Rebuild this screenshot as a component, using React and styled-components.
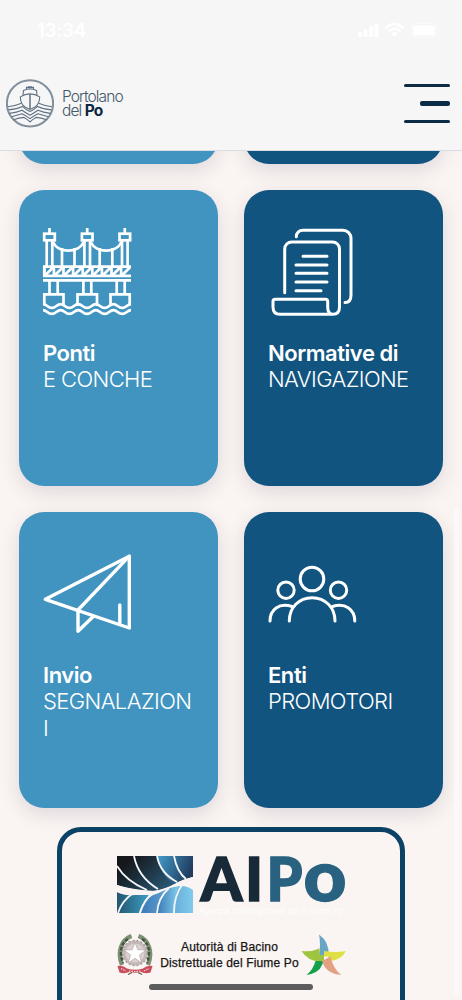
import React from "react";
import styled, { createGlobalStyle } from "styled-components";

const GlobalStyle = createGlobalStyle`
  * {
    box-sizing: border-box;
  }
  body {
    margin: 0;
    background-color: #faf4f2;
    font-family: Inter, "Liberation Sans", sans-serif;
  }
`;

const Page = styled.div`
  position: relative;
  display: flex;
  flex-direction: column;
  height: 1000px;
  overflow: hidden;
`;

const Header = styled.header`
  display: flex;
  flex-direction: column;
  flex: none;
  height: 151px;
  background-color: #f6f6f6;
  border-bottom: 1px solid #d9dde1;
  z-index: 10;
`;

const StatusBar = styled.div`
  display: flex;
  align-items: center;
  justify-content: space-between;
  height: 60px;
  padding: 0 21px 0 37px;
  color: white;
`;

const Time = styled.span`
  font-size: 18.5px;
  font-weight: 600;
  letter-spacing: -0.1px;
`;

const NavRow = styled.div`
  display: flex;
  align-items: center;
  justify-content: space-between;
  height: 87px;
  padding: 0 12px 0 6px;
`;

const Brand = styled.div`
  display: flex;
  align-items: center;
  gap: 8px;
`;

const BrandName = styled.div`
  font-size: 15.5px;
  font-weight: 300;
  line-height: 14px;
  letter-spacing: -0.9px;
  color: #43566a;

  b {
    font-weight: 700;
    color: #0b2840;
  }
`;

const MenuButton = styled.button`
  display: flex;
  flex-direction: column;
  align-items: flex-end;
  justify-content: space-between;
  width: 46px;
  height: 39px;
  padding: 0;
  border: none;
  background: none;
`;

const MenuLine = styled.span`
  width: ${(props) => (props.$short ? "30px" : "46px")};
  height: ${(props) => (props.$short ? "5px" : "2.6px")};
  border-radius: 2px;
  background-color: #0c2b44;
`;

const Main = styled.main`
  flex: 1;
  min-height: 0;
  overflow: hidden;
`;

/* scrolled so that only the bottom edge of the first row is visible */
const Grid = styled.div`
  display: grid;
  grid-template-columns: 199px 199px;
  grid-auto-rows: 296px;
  gap: 26px;
  margin: -283px 0 0 19px;
`;

const Card = styled.a`
  display: flex;
  flex-direction: column;
  padding: 38px 24px 0;
  border-radius: 25px;
  background-color: ${(props) => (props.$dark ? "#115480" : "#4094bf")};
  box-shadow: 0 6px 20px rgba(50, 30, 70, 0.13);
  color: white;
  font-size: 22px;
  line-height: 26.4px;
`;

const CardIcon = styled.svg`
  flex: none;
  width: 88px;
  height: 88px;
  margin-bottom: 24px;
  overflow: visible;
  fill: none;
  stroke: white;
  stroke-width: ${(props) => props.$stroke || 3};
  stroke-linecap: ${(props) => (props.$square ? "butt" : "round")};
  stroke-linejoin: ${(props) => (props.$square ? "miter" : "round")};
`;

const CardTitle = styled.strong`
  font-weight: 600;
  letter-spacing: -0.45px;
  white-space: nowrap;
`;

const CardText = styled.span`
  font-weight: 300;
  letter-spacing: -0.6px;
  word-break: break-all;
`;

const Sponsors = styled.section`
  display: flex;
  flex-direction: column;
  align-items: center;
  width: 348px;
  height: 400px;
  margin: 19px 0 0 57px;
  padding-top: 24px;
  border: 5px solid #0b4266;
  border-radius: 24px;
`;

const AuthorityRow = styled.div`
  display: flex;
  align-items: center;
  width: 230px;
  height: 42px;
  margin-top: 15px;
`;

const AuthorityName = styled.p`
  flex: 1;
  margin: 0 0 0 4px;
  font-family: "Liberation Sans", Arial, sans-serif;
  font-size: 12px;
  letter-spacing: 0.16px;
  line-height: 16px;
  text-align: center;
  white-space: nowrap;
  color: #151515;
  -webkit-text-stroke: 0.25px #151515;
`;

const ScrollThumb = styled.div`
  position: absolute;
  top: 508px;
  right: 3px;
  width: 5px;
  height: 487px;
  border-radius: 3px;
  background-color: rgba(255, 255, 255, 0.5);
`;

const HomeIndicator = styled.div`
  position: absolute;
  bottom: 10px;
  left: 149px;
  width: 164px;
  height: 6px;
  border-radius: 3px;
  background-color: #5d5c5c;
`;

const LogoSvg = styled.svg`
  flex: none;
  overflow: visible;
`;

const StatusIcons = () => (
  <svg width="84" height="16" viewBox="0 0 84 16" fill="white">
    <rect x="1" y="10" width="4" height="5" rx="1" />
    <rect x="6.6" y="7.5" width="4" height="7.5" rx="1" />
    <rect x="12.2" y="4.5" width="4" height="10.5" rx="1" />
    <rect x="17.4" y="1.5" width="4" height="13.5" rx="1" />
    <g fill="none" stroke="white" strokeWidth="2.6">
      <path d="M28.5 6 Q37.5 -2 46.5 6" />
      <path d="M31.5 9.4 Q37.5 4 43.5 9.4" />
    </g>
    <path d="M37.5 15 L34 11.6 Q37.5 9 41 11.6 Z" />
    <rect x="54" y="1.5" width="26" height="13.5" rx="4" fill="none" stroke="white" strokeOpacity="0.45" />
    <rect x="56" y="3.5" width="22" height="9.5" rx="2.4" />
    <path d="M81.5 6 q2 2.2 0 4.4 z" opacity="0.5" />
  </svg>
);

const BoatLogo = () => (
  <svg width="48" height="50" viewBox="0 0.6 48 50" fill="none" stroke="#5f7283">
    <circle cx="24" cy="25" r="23.1" strokeWidth="2" stroke="#82909c" />
    <g strokeWidth="1.1">
      <path d="M14.3 18.5 Q19 15.5 24 15.5 Q29 15.5 33.7 18.5 Q33.5 25.5 29 28.5 Q26 30 24 31 Q22 30 19 28.5 Q14.5 25.5 14.3 18.5 Z" />
      <path d="M17 16.8 L17.5 12 Q24 9 30.5 12 L31 16.8" />
      <path d="M20.5 11 V9 H27.5 V11 M22 8.5 H26" />
      <path d="M24 15.5 V31" strokeWidth="1.5" />
      <path d="M2 28.3 Q9 27.5 15.5 24.8" />
      <path d="M46 28.3 Q39 27.5 32.5 24.8" />
      <path d="M2.5 31.5 Q11 30.5 16.5 28 Q20 31.5 24 33.2 Q28 31.5 31.5 28 Q37 30.5 45.5 31.5" />
      <path d="M3.5 35 Q11 34 16 31.8 Q20 34.5 24 36.8 Q28 34.5 32 31.8 Q37 34 44.5 35" />
      <path d="M5.5 38.3 Q11 37 16 35.3 Q20 37.2 24 40.2 Q28 37.2 32 35.3 Q37 37 42.5 38.3" />
      <path d="M7.5 41.3 Q13 39.2 18 39 Q21 40.5 24 43.5 Q27 40.5 30 39 Q35 39.2 40.5 41.3" />
    </g>
  </svg>
);

const wave = (y, a) => {
  let d = `M0 ${y - a}`;
  for (let i = 0; i < 5; i++) {
    const x = i * 17.6;
    d += ` C${x + 4} ${y - a} ${x + 4.5} ${y + a} ${x + 8.8} ${y + a}`;
    d += ` S${x + 13.6} ${y - a} ${x + 17.6} ${y - a}`;
  }
  return d;
};

const BridgeIcon = () => (
  <CardIcon viewBox="0 0 88 88" $stroke={2.7} $square>
    {[6.5, 44.2, 81.8].map((x) => (
      <g key={x}>
        <path d={`M${x} 0 V5.5 M${x - 2.8} 12.5 V38 M${x + 2.8} 12.5 V38`} />
        <rect x={x - 5.3} y="5.7" width="10.6" height="6.6" />
      </g>
    ))}
    <path d="M10 14 C15 25.5 35.5 25.5 40.7 14 M47.7 14 C53 25.5 73.3 25.5 78.5 14" />
    <path d="M19 20 V38 M31.5 20 V38 M56.7 20 V38 M69.3 20 V38" />
    <path d="M88 38.7 H1.3 V47.9 H88 M0 52.3 H88" />
    {[0, 1, 2, 3, 4, 5, 6, 7, 8].map((i) => (
      <path key={i} d={`M${1.3 + i * 9.6} 38.5 V48 M${2 + i * 9.6} 47.5 L${10 + i * 9.6} 39.5`} />
    ))}
    <path d="M6.5 53 V66 M14.7 53 V66 M40.4 53 V66 M48.3 53 V66 M73.7 53 V66 M81.7 53 V66" />
    <path d="M1.3 77 V66.4 H20.5 V78 M34.5 78 V66.4 H54 V78 M67.5 78 V66.4 H86.7 V77" />
    <path d={wave(78, 1.9)} />
    <path d={wave(84, 1.9)} />
  </CardIcon>
);

const DocumentIcon = () => (
  <CardIcon viewBox="0 0 88 88">
    <path d="M28.3 8.7 C28.3 4.8 31 2.3 35 2.3 H75 a8 8 0 0 1 8 8 V67 C83 72 80.5 74.6 77 74.6" />
    <path d="M16.7 64.7 V21 a7 7 0 0 1 7-7 H64.5 a7 7 0 0 1 7 7 V79 C71.5 83.8 69 86.3 64.8 86.3 H12 C7.5 86.3 5 83.5 5 79 V73.2 Q5 71.2 7 71.2 H57.5 Q59.7 71.2 59.7 73.5 V79 C59.7 83.5 61.5 86.3 65 86.3" />
    <path d="M35 28.3 H59 M28 37 H59 M28 45.3 H59 M28 54 H59 M28 62.7 H53" />
  </CardIcon>
);

const PlaneIcon = () => (
  <CardIcon viewBox="0 0 88 88" $stroke={3.4}>
    <path d="M86.3 6.2 L2.3 49.3 L86.3 78 Z" />
    <path d="M86.3 6.2 L35 60 V81.2 L50.5 66.2 M76.8 55 V73" />
  </CardIcon>
);

const PeopleIcon = () => (
  <CardIcon viewBox="0 0 88 88">
    <circle cx="44" cy="29" r="11.8" />
    <circle cx="18" cy="40.2" r="8.2" />
    <circle cx="70.5" cy="40.2" r="8.2" />
    <path d="M21.3 71 C21.3 57.5 31 47.7 44.1 47.7 S67 57.5 67 71" />
    <path d="M2 71 C2 59.5 11 52.5 24 56.5 M86.8 71 C86.8 59.5 77.5 52.5 64.5 56.5" />
  </CardIcon>
);

const AipoLogo = () => (
  <LogoSvg width="230" height="63" viewBox="0 0 230 63">
    <defs>
      <linearGradient id="night" x1="0" x2="1" y1="0" y2="0.6">
        <stop offset="0.2" stopColor="#15171b" />
        <stop offset="1" stopColor="#27546f" />
      </linearGradient>
      <linearGradient id="river" x1="0" x2="1" y1="0" y2="0.3">
        <stop offset="0" stopColor="#459dcc" />
        <stop offset="1" stopColor="#203d5f" />
      </linearGradient>
      <linearGradient id="teal">
        <stop offset="0" stopColor="#235670" />
        <stop offset="1" stopColor="#3d9dc3" />
      </linearGradient>
      <linearGradient id="sky">
        <stop offset="0" stopColor="#3c78b5" />
        <stop offset="1" stopColor="#7fcbec" />
      </linearGradient>
    </defs>
    <path d="M1 0 H42 C44 12 52 21 60 27 Q50 33 38 35 C24 34 10 32 1 29 Z" fill="url(#night)" />
    <path d="M41 0 H77 V21 C68 23 62 26 58 28 C49 22 43 12 41 0 Z" fill="url(#river)" />
    <path d="M1 36 Q7 39 14 39 L33 39 C29 43 25 50 23 57 H1 Z" fill="url(#teal)" />
    <path d="M24 57 C26 48 31 41 40 38 C46 36 51 32 59 31 Q69 28 77 34 V57 H60 Z" fill="url(#sky)" />
    <path d="M41 57 C43 46 45 38 52 33 L62 31 C60 38 58 46 58 57 Z" fill="url(#sky)" />
    <g fill="none" stroke="#f3f7f9" strokeWidth="1.8">
      <path d="M1 10 Q10 25 31 34 M18 0 Q22 21 42 33 M41 0 Q44 17 61 26 M58 0 Q61 16 70 23" />
      <path d="M2 57 Q6 45 16 38 M24 57 Q28 44 37 37 M41 57 Q42 42 53 32 M58 57 Q58 40 66 29" />
    </g>
    <path d="M1 29 C13 33 26 35 36 35 C54 34 62 24 77 21 V31 C67 26 59 31 51 32 C41 39 30 38 19 39 C11 40 5 38 1 36 Z" fill="#faf4f2" />
    <g fontFamily="Lato, sans-serif" fontWeight="900" fontSize="60" strokeWidth="1.4">
      <text x="84.5" y="45" fill="#182a37" stroke="#182a37" textLength="42" lengthAdjust="spacingAndGlyphs">A</text>
      <text x="129" y="45" fill="#182a37" stroke="#182a37">I</text>
      <text x="150.5" y="45" fill="#296280" stroke="#296280" textLength="36" lengthAdjust="spacingAndGlyphs">P</text>
      <text x="187.5" y="45" fill="#296280" stroke="#296280" fontSize="70" textLength="43" lengthAdjust="spacingAndGlyphs">o</text>
    </g>
    <text x="83" y="57.5" fontSize="8" fill="#ffffff" textLength="144">Agenzia Interregionale per il fiume Po</text>
  </LogoSvg>
);

const RepublicEmblem = () => (
  <svg width="38" height="42" viewBox="0 0 38 42">
    <circle cx="19" cy="19" r="11" fill="#dcd0d0" stroke="#c4b9b9" strokeWidth="3" />
    <circle cx="19" cy="19" r="12.5" fill="none" stroke="#ada0a0" strokeWidth="1.6" strokeDasharray="2 2" />
    <g fill="none" stroke="#7e8f76" strokeWidth="4.4">
      <path d="M15.5 2 C5 6 1 18 6 31" />
      <path d="M22.5 2 C33 6 37 18 32 31" />
    </g>
    <path d="M12 5 C5 9 3 18 7 29 M26 5 C33 9 35 18 31 29" fill="none" stroke="#41553f" strokeWidth="2.4" strokeDasharray="3.4 1.8" />
    <path d="M19 8.5 L21.8 15.7 L30 16 L23.5 21 L25.8 29 L19 24.3 L12.2 29 L14.5 21 L8 16 L16.2 15.7 Z" fill="white" stroke="#a99b9b" strokeWidth="0.6" />
    <path d="M1.5 32 Q7 31 11 34.5 Q19 37 27 34.5 Q31 31 36.5 32 L34.5 38.5 Q29 40 25 38 Q19 39.5 13 38 Q9 40 3.5 38.5 Z" fill="#c94c5a" />
    <path d="M5 34.5 L10 37 M13 37 Q19 38 25 37 M28 37 L33 34.5" fill="none" stroke="#f5d7da" strokeWidth="1.2" strokeDasharray="1.5 1" />
    <path d="M12 40.5 L16 38.5 M26 40.5 L22 38.5" stroke="#6b5a48" strokeWidth="1.3" />
  </svg>
);

const StarLogo = () => (
  <svg width="45" height="42" viewBox="0 0 45 42">
    <path d="M18 .5 Q28.5 8 27.5 21 L18 22 Q20 10 18 .5 Z" fill="#69a5c5" />
    <path d="M.5 17 Q11 18 18.5 14.5 V21 H23 V27 Q8 29 .5 17 Z" fill="#9fc53f" />
    <path d="M44.8 17 Q35 19 23 17 V22.5 H27 L30 27 Q41 25 44.8 17 Z" fill="#dfe043" />
    <path d="M14.5 27 H23 L21 31 Q18 39 5.5 41 Q12 36 14.5 27 Z" fill="#15a04c" />
    <path d="M21 27 L29.5 22.5 Q32 35 40.5 41 Q25 40 21 27 Z" fill="#e3a184" />
  </svg>
);

const App = () => {
  return (
    <Page>
      <GlobalStyle />
      <Header>
        <StatusBar>
          <Time>13:34</Time>
          <StatusIcons />
        </StatusBar>
        <NavRow>
          <Brand>
            <BoatLogo />
            <BrandName>
              Portolano
              <br />
              del <b>Po</b>
            </BrandName>
          </Brand>
          <MenuButton aria-label="Menu">
            <MenuLine />
            <MenuLine $short />
            <MenuLine />
          </MenuButton>
        </NavRow>
      </Header>
      <Main>
        <Grid>
          <Card />
          <Card $dark />
          <Card>
            <BridgeIcon />
            <CardTitle>Ponti</CardTitle>
            <CardText>E CONCHE</CardText>
          </Card>
          <Card $dark>
            <DocumentIcon />
            <CardTitle>Normative di</CardTitle>
            <CardText>NAVIGAZIONE</CardText>
          </Card>
          <Card>
            <PlaneIcon />
            <CardTitle>Invio</CardTitle>
            <CardText>SEGNALAZIONI</CardText>
          </Card>
          <Card $dark>
            <PeopleIcon />
            <CardTitle>Enti</CardTitle>
            <CardText>PROMOTORI</CardText>
          </Card>
        </Grid>
        <Sponsors>
          <AipoLogo />
          <AuthorityRow>
            <RepublicEmblem />
            <AuthorityName>
              Autorità di Bacino
              <br />
              Distrettuale del Fiume Po
            </AuthorityName>
            <StarLogo />
          </AuthorityRow>
        </Sponsors>
      </Main>
      <ScrollThumb />
      <HomeIndicator />
    </Page>
  );
};

export default App;
